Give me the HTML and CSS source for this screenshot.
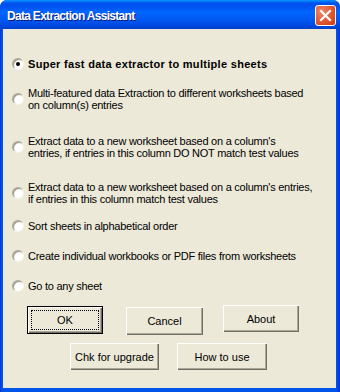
FILE: index.html
```html
<!DOCTYPE html>
<html>
<head>
<meta charset="utf-8">
<link rel="stylesheet" href="styles.css">
</head>
<body>
<div class="window">
  <div class="titlebar">
    <span class="title">Data Extraction Assistant</span>
    <span class="close">
      <svg width="13" height="13" viewBox="0 0 13 13"><path d="M2 2 L11 11 M11 2 L2 11" stroke="#fff" stroke-width="2.2" stroke-linecap="square"/></svg>
    </span>
  </div>
  <div class="client">
    <div class="options">
      <label class="opt o1"><span class="radio checked"></span><span class="txt bold">Super fast data extractor to multiple sheets</span></label>
      <label class="opt o2"><span class="radio"></span><span class="txt">Multi-featured data Extraction to different worksheets based<br>on column(s) entries</span></label>
      <label class="opt o3"><span class="radio"></span><span class="txt">Extract data to a new worksheet based on a column's<br>entries, if entries in this column DO NOT match test values</span></label>
      <label class="opt o4"><span class="radio"></span><span class="txt">Extract data to a new worksheet based on a column's entries,<br>if entries in this column match test values</span></label>
      <label class="opt o5"><span class="radio"></span><span class="txt">Sort sheets in alphabetical order</span></label>
      <label class="opt o6"><span class="radio"></span><span class="txt">Create individual workbooks or PDF files from worksheets</span></label>
      <label class="opt o7"><span class="radio"></span><span class="txt">Go to any sheet</span></label>
    </div>
    <div class="btnrow r1">
      <button class="btn default b-ok"><span class="focus">OK</span></button>
      <button class="btn b-cancel">Cancel</button>
      <button class="btn b-about">About</button>
    </div>
    <div class="btnrow r2">
      <button class="btn b-chk">Chk for upgrade</button>
      <button class="btn b-how">How to use</button>
    </div>
  </div>
</div>
</body>
</html>
```
FILE: styles.css
```css
html, body {
  margin: 0;
  padding: 0;
  background: #ffffff;
}
.window {
  width: 340px;
  height: 392px;
  box-sizing: border-box;
  display: flex;
  flex-direction: column;
  background: linear-gradient(to right, #0831D9 0px, #0055EA 2px, #0055EA 336px, #0831D9 340px);
  border-radius: 7px 7px 0 0;
  overflow: hidden;
  font-family: "Liberation Sans", Arial, sans-serif;
  font-size: 11px;
  color: #000;
}
.titlebar {
  height: 29px;
  flex: none;
  display: flex;
  align-items: center;
  justify-content: space-between;
  padding: 0 4px 0 7px;
  background: linear-gradient(to bottom, #0997FF 0px, #0053EE 3px, #0050EE 6px, #0066FF 12px, #0058F0 20px, #0047DD 26px, #0040C8 29px);
}
.title {
  color: #fff;
  font-family: "Liberation Sans", Arial, sans-serif;
  font-weight: bold;
  font-size: 12px;
  letter-spacing: -0.7px;
  text-shadow: 1px 1px 0 #0A1883;
  margin-top: 2px;
}
.close {
  width: 19px;
  height: 19px;
  border: 1px solid #fff;
  border-radius: 3px;
  background: radial-gradient(circle at 30% 30%, #F0866A 0%, #E15632 55%, #C73A13 100%);
  display: flex;
  align-items: center;
  justify-content: center;
  margin-top: 1px;
}
.close svg { display: block; }
.client {
  flex: 1;
  margin: 0 4px 4px 3px;
  background: #ECE9D8;
  display: flex;
  flex-direction: column;
}
.options {
  display: flex;
  flex-direction: column;
  padding-left: 9px;
}
.opt {
  display: flex;
  align-items: center;
  line-height: 12px;
}
.o1 { margin-top: 29px; }
.o2 { margin-top: 17px; }
.o3 { margin-top: 24px; }
.o4 { margin-top: 22px; }
.o5 { margin-top: 15px; }
.o6 { margin-top: 18px; }
.o7 { margin-top: 18px; }
.radio {
  width: 12px;
  height: 12px;
  box-sizing: border-box;
  border-radius: 50%;
  flex: none;
  border: 1px solid;
  border-color: #ACA899 #F5F4EA #F5F4EA #ACA899;
  background: radial-gradient(circle at 60% 60%, #ffffff 0%, #ffffff 45%, #E7E5DA 70%, #D6D3C5 100%);
  box-shadow: inset 1px 1px 0 #9D9A8C;
  margin-right: 4px;
  position: relative;
}
.radio.checked::after {
  content: "";
  position: absolute;
  left: 3px;
  top: 3px;
  width: 4px;
  height: 4px;
  border-radius: 50%;
  background: #000;
}
.txt {
  letter-spacing: -0.25px;
}
.txt.bold {
  font-weight: bold;
  letter-spacing: 0.3px;
}
.btnrow {
  display: flex;
  align-items: flex-start;
}
.r1 { margin-top: 14px; }
.r2 { margin-top: 8px; }
.btn {
  box-sizing: border-box;
  font-family: "Liberation Sans", Arial, sans-serif;
  font-size: 11px;
  color: #000;
  background: #ECE9D8;
  border: none;
  padding: 0;
  border-radius: 0;
  box-shadow: inset 1px 1px 0 #ffffff, inset -1px -1px 0 #716F64, inset -2px -2px 0 #ACA899;
  display: flex;
  align-items: center;
  justify-content: center;
}
.btn.default {
  border: 1px solid #000;
  padding: 3px;
}
.focus {
  flex: 1;
  align-self: stretch;
  border: 1px dotted #000;
  display: flex;
  align-items: center;
  justify-content: center;
}
.b-ok { width: 76px; height: 28px; margin-left: 24px; }
.b-cancel { width: 77px; height: 28px; margin-left: 23px; margin-top: 1px; }
.b-about { width: 76px; height: 27px; margin-left: 20px; margin-top: -1px; }
.b-chk { width: 89px; height: 27px; margin-left: 67px; }
.b-how { width: 90px; height: 27px; margin-left: 18px; }
```
